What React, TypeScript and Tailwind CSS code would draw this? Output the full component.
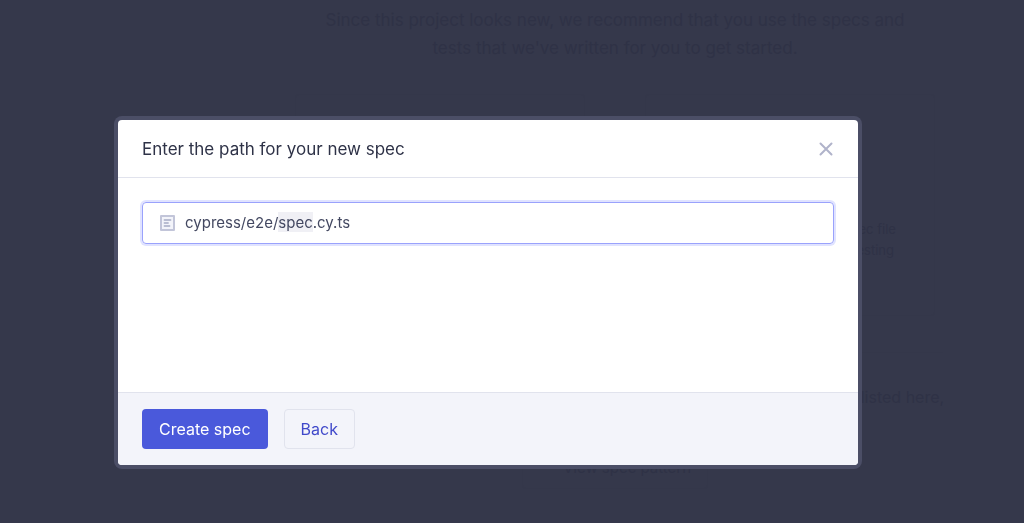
import { useState } from "react"

const cards = [
  {
    title: "Scaffold example specs",
    lines: ["We'll generate several example", "specs to help guide you on how to", "write tests in Cypress."],
  },
  {
    title: "Create new spec",
    lines: ["We'll generate a template spec file", "which can be used to start testing", "your application."],
  },
]

function DocumentIcon() {
  return (
    <svg className="w-4 h-4 shrink-0" fill="none" viewBox="0 0 16 16">
      <rect x="2" y="1" width="13" height="14" fill="#f3f4fa" stroke="#c2c5d9" strokeWidth="2" strokeLinejoin="round" />
      <path d="M5.5 5H11.5M5.5 8H9M5.5 11H10.5" stroke="#b9bdd2" strokeWidth="1.8" strokeLinecap="round" />
    </svg>
  )
}

function CloseIcon() {
  return (
    <svg className="w-4 h-4" fill="none" viewBox="0 0 16 16">
      <path d="M2.5 2.5L13.5 13.5M13.5 2.5L2.5 13.5" stroke="#b0b3ca" strokeWidth="2" strokeLinecap="round" />
    </svg>
  )
}

function GettingStarted() {
  return (
    <main className="pl-[206px] pt-[6px] flex flex-col items-center text-center text-[#2f3246]" aria-hidden="true">
      <p className="text-[17px] leading-7">
        Since this project looks new, we recommend that you use the specs and
        <br />
        tests that we've written for you to get started.
      </p>

      <div className="mt-8 flex gap-[60px]">
        {cards.map((card) => (
          <div key={card.title} className="w-[290px] h-[222px] pt-20 rounded border border-[#34374a]">
            <h2 className="text-[17px] leading-7">{card.title}</h2>
            <p className="mt-4 text-[13px] leading-[21px]">
              {card.lines.map((line) => (
                <span key={line} className="block">{line}</span>
              ))}
            </p>
          </div>
        ))}
      </div>

      <div className="mt-9 w-[656px] pt-8 flex flex-col items-center border-t border-[#34374a]">
        <p className="text-base whitespace-nowrap">
          If you feel that you're seeing this screen in error, and there should be specs listed here,
          <br />
          you likely need to update the spec pattern.
        </p>
        <div className="mt-4 h-10 pl-10 pr-4 rounded border border-[#34374a] text-[15px] leading-9">View spec pattern</div>
      </div>
    </main>
  )
}

export default function App() {
  const [open, setOpen] = useState(true)
  const [path, setPath] = useState("cypress/e2e/spec.cy.ts")

  const at = path.indexOf("spec")

  return (
    <div className="h-screen overflow-hidden bg-[#35384b] font-['Inter',sans-serif]">
      <GettingStarted />

      {open && (
        <div className="fixed inset-0 flex items-start justify-center pt-[120px] pl-4 pr-16">
          <div
            role="dialog"
            aria-labelledby="dialog-title"
            className="w-full max-w-[740px] rounded bg-white ring-4 ring-[#4b4e66]"
          >
            <header className="h-[58px] px-6 flex items-center justify-between border-b border-[#e1e3ed]">
              <h1 id="dialog-title" className="text-[17px] leading-6 text-[#2e3247]">
                Enter the path for your new spec
              </h1>
              <button type="button" aria-label="Close" onClick={() => setOpen(false)}>
                <CloseIcon />
              </button>
            </header>

            <div className="h-[214px] p-6">
              <div className="h-[42px] px-4 flex items-center gap-2.5 rounded border border-[#9aa2fc] ring-2 ring-[#e0e3ff]">
                <DocumentIcon />
                <div className="relative flex-1 h-6 text-[15px] leading-6">
                  {/* highlight under the editable file name */}
                  {at >= 0 && (
                    <div className="absolute inset-0 flex whitespace-pre text-transparent" aria-hidden="true">
                      <span>{path.slice(0, at)}</span>
                      <span className="h-5 mt-px bg-[#f0f0f5]">spec</span>
                    </div>
                  )}
                  <input
                    type="text"
                    aria-label="Spec path"
                    value={path}
                    onChange={(e) => setPath(e.target.value)}
                    className="relative block w-full h-6 bg-transparent text-[#434861] outline-none"
                  />
                </div>
              </div>
            </div>

            <footer className="px-6 py-4 flex gap-4 rounded-b border-t border-[#e1e3ed] bg-[#f3f4fa]">
              <button type="button" className="h-10 px-[17px] rounded bg-[#4a59db] text-base text-white">
                Create spec
              </button>
              <button
                type="button"
                onClick={() => setOpen(false)}
                className="h-10 px-4 rounded border border-[#e1e3ed] text-base text-[#4049ca]"
              >
                Back
              </button>
            </footer>
          </div>
        </div>
      )}
    </div>
  )
}
